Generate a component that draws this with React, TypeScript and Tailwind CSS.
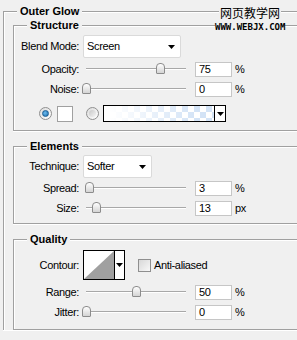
import React from "react";

const etched = "border-[#a0a0a0] shadow-[inset_1px_1px_0_#fff,0_1px_0_#fff]";

function Legend({ children }: { children: React.ReactNode }) {
  return (
    <legend className="ml-[13px] bg-[#f0f0f0] px-[3px] text-[11px] font-bold leading-[13px] tracking-normal">
      {children}
    </legend>
  );
}

function Label({ children }: { children: React.ReactNode }) {
  return <div className="w-[65px] shrink-0 text-right">{children}</div>;
}

function Arrow() {
  return (
    <svg width="7" height="4" viewBox="0 0 7 4" className="shrink-0">
      <path d="M0 0h7L3.5 4z" fill="#000" />
    </svg>
  );
}

function Select({ value, width }: { value: string; width: string }) {
  return (
    <div
      className={`ml-[4px] flex h-[23px] items-center justify-between rounded-[2px] border border-[#dadada] bg-white pl-[3px] pr-[5px] ${width}`}
    >
      <span>{value}</span>
      <Arrow />
    </div>
  );
}

function SliderRow({
  label,
  pct,
  value,
  unit,
}: {
  label: string;
  pct: number;
  value: string;
  unit: string;
}) {
  return (
    <div className="flex h-[20px] items-center">
      <Label>{label}</Label>
      <div className="relative ml-[3px] h-[20px] w-[113px] shrink-0">
        <div className="absolute left-[4px] top-[9px] h-[2px] w-[100px] border-t border-[#a8a8a8] bg-white" />
        <div
          className="absolute top-[4px] h-[11px] w-[9px] rounded-t-[4px] rounded-b-[1px] border border-[#8c8c8c] bg-gradient-to-b from-white to-[#d4d4d4]"
          style={{ left: `${pct * 0.99}px` }}
        />
      </div>
      <div className="h-[15px] w-[37px] shrink-0 border border-[#c6c6c6] bg-white pl-[3px] leading-[13px]">
        {value}
      </div>
      <span className="ml-[3px]">{unit}</span>
    </div>
  );
}

function Radio({ checked, className }: { checked?: boolean; className: string }) {
  return (
    <div
      className={`flex h-[13px] w-[13px] shrink-0 items-center justify-center rounded-full border border-[#8f8f8f] bg-gradient-to-br from-[#dcdcdc] to-white ${className}`}
    >
      <div
        className={
          checked
            ? "h-[7px] w-[7px] rounded-full border border-[#1b5f96] bg-[radial-gradient(circle_at_40%_40%,#6cbcf0,#1a6aa8)]"
            : "h-[7px] w-[7px] rounded-full bg-gradient-to-br from-[#c8c8c8] to-[#f4f4f4]"
        }
      />
    </div>
  );
}

export default function App() {
  return (
    <div className="relative h-[340px] w-[297px] overflow-hidden bg-[#f0f0f0] pl-[3px] pt-[5px] font-['Liberation_Sans',Tahoma,sans-serif] text-[11px] leading-[13px] tracking-[-0.35px] text-black">
      <fieldset className={`w-[330px] border-l border-t ${etched}`}>
        <Legend>Outer Glow</Legend>

        {/* Structure */}
        <fieldset className={`ml-[9px] mt-[1px] w-[320px] border-b border-l border-t pb-[8px] ${etched}`}>
          <Legend>Structure</Legend>
          <div className="mt-[3px] flex h-[23px] items-center">
            <Label>Blend Mode:</Label>
            <Select value="Screen" width="w-[98px]" />
          </div>
          <div className="mt-[1px]">
            <SliderRow label="Opacity:" pct={75} value="75" unit="%" />
            <SliderRow label="Noise:" pct={0} value="0" unit="%" />
          </div>
          <div className="mt-[6px] flex h-[17px] items-center">
            <Radio checked className="ml-[25px]" />
            <div className="ml-[5px] h-[16px] w-[16px] shrink-0 border border-[#a0a0a0] bg-white" />
            <Radio className="ml-[13px]" />
            <div className="ml-[4px] flex h-[17px] w-[123px] shrink-0 border border-black">
              <div className="flex-1 [background-image:linear-gradient(to_right,#fff_5%,rgba(255,255,255,0)_85%),repeating-conic-gradient(#d3e3f6_0_25%,#fff_0_50%)] [background-size:100%_100%,12px_12px]" />
              <div className="flex w-[11px] items-center justify-center border-l border-black bg-white">
                <Arrow />
              </div>
            </div>
          </div>
        </fieldset>

        {/* Elements */}
        <fieldset className={`ml-[9px] mt-[9px] w-[320px] border-b border-l border-t pb-[5px] ${etched}`}>
          <Legend>Elements</Legend>
          <div className="mt-[2px] flex h-[23px] items-center">
            <Label>Technique:</Label>
            <Select value="Softer" width="w-[69px]" />
          </div>
          <SliderRow label="Spread:" pct={3} value="3" unit="%" />
          <SliderRow label="Size:" pct={10.6} value="13" unit="px" />
        </fieldset>

        {/* Quality */}
        <fieldset className={`ml-[9px] mt-[9px] w-[320px] border-b border-l border-t pb-[7px] ${etched}`}>
          <Legend>Quality</Legend>
          <div className="mt-[4px] flex h-[30px] items-center">
            <Label>Contour:</Label>
            <div className="ml-[4px] flex h-[30px] w-[42px] shrink-0 border border-black bg-white">
              <svg width="30" height="28" viewBox="0 0 30 28" className="shrink-0">
                <path d="M0 28L30 0V28z" fill="#a0a0a0" />
              </svg>
              <div className="flex flex-1 items-center justify-center border-l border-black">
                <Arrow />
              </div>
            </div>
            <div className="ml-[13px] h-[13px] w-[13px] shrink-0 border border-[#8f8f8f] bg-gradient-to-br from-[#d8d8d8] to-[#f8f8f8]" />
            <span className="ml-[3px]">Anti-aliased</span>
          </div>
          <div className="mt-[2px]">
            <SliderRow label="Range:" pct={50} value="50" unit="%" />
            <SliderRow label="Jitter:" pct={0} value="0" unit="%" />
          </div>
        </fieldset>
      </fieldset>

      <div className="absolute left-[215px] top-[6px] flex flex-col items-start tracking-normal">
        <span className="ml-[4px] bg-[#f0f0f0] px-[1px] font-['Noto_Sans_CJK_SC',sans-serif] text-[12px] leading-[14px]">
          网页教学网
        </span>
        <span className="mt-[3px] bg-[#f0f0f0] font-['DejaVu_Sans_Mono',monospace] text-[9px] font-bold leading-[8px]">
          WWW.WEBJX.COM
        </span>
      </div>
    </div>
  );
}
